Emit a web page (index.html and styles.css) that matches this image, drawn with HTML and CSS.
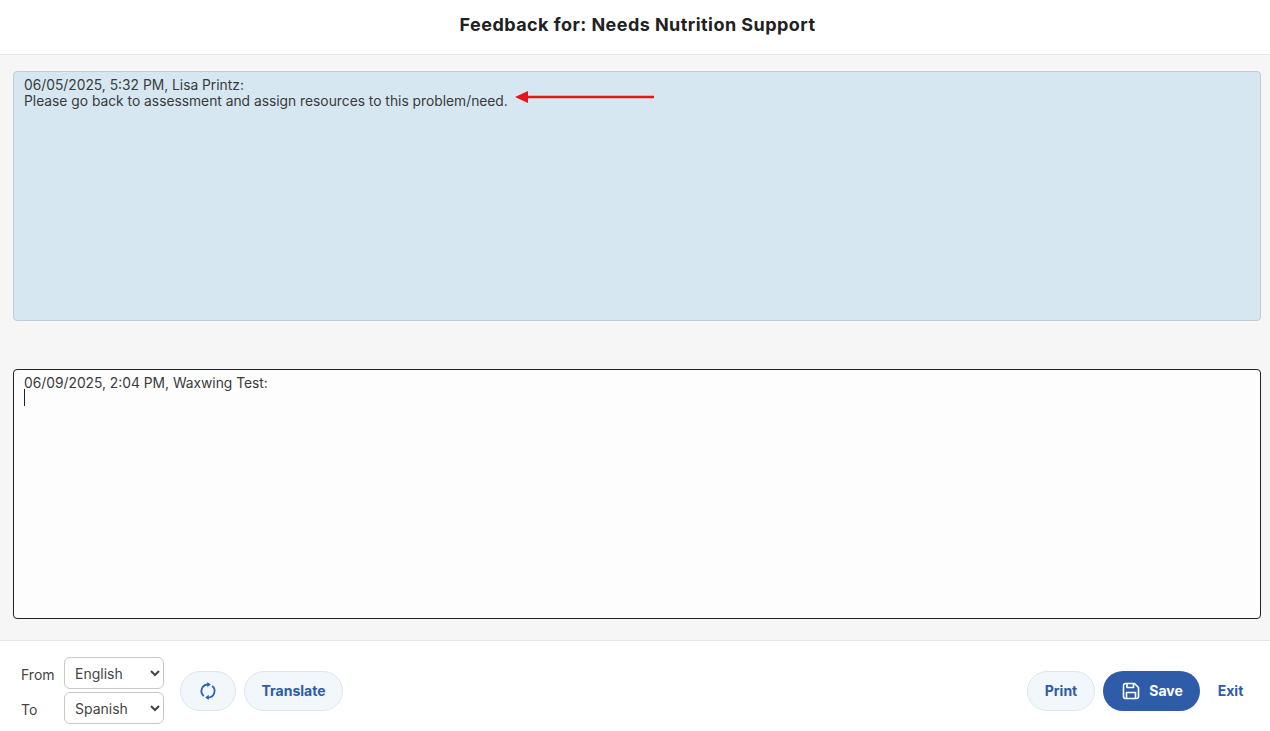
FILE: index.html
```html
<!DOCTYPE html>
<html lang="en">
<head>
<meta charset="utf-8">
<title>Feedback</title>
<link rel="stylesheet" href="styles.css">
</head>
<body>
<div class="page">
  <header class="header"><h1 class="title">Feedback for: Needs Nutrition Support</h1></header>
  <main class="main">
    <div class="note-wrap">
      <textarea class="note note-read" readonly>06/05/2025, 5:32 PM, Lisa Printz:
Please go back to assessment and assign resources to this problem/need.</textarea>
      <svg class="arrow" width="140" height="14" viewBox="0 0 140 14" aria-hidden="true"><path d="M0 7 13 1V5.700H139V8.300H13V13Z" fill="#e3161b"/></svg>
    </div>
    <div class="note-wrap">
      <textarea class="note note-edit">06/09/2025, 2:04 PM, Waxwing Test:
</textarea>
      <span class="caret"></span>
    </div>
  </main>
  <footer class="footer">
    <div class="langs">
      <label class="lang"><span class="lang-label">From</span>
        <select class="select"><option>English</option></select></label>
      <label class="lang"><span class="lang-label">To</span>
        <select class="select"><option>Spanish</option></select></label>
    </div>
    <button class="btn btn-light btn-icon" type="button" aria-label="Swap languages">
      <svg width="18" height="18" viewBox="0 0 18 18" fill="none" stroke="#2f62b0" stroke-width="1.800" aria-hidden="true">
        <path d="M4.800 14A6.500 6.500 0 0 1 9 2.500"/><path d="M13.200 4A6.500 6.500 0 0 1 9 15.500"/>
        <path d="M8.300 0 11.800 2.600 8.300 5.200Z" fill="#2f62b0" stroke="none"/><path d="M9.700 12.800 6.200 15.400 9.700 18Z" fill="#2f62b0" stroke="none"/>
      </svg>
    </button>
    <button class="btn btn-light btn-translate" type="button">Translate</button>
    <div class="spacer"></div>
    <button class="btn btn-light btn-print" type="button">Print</button>
    <button class="btn btn-save" type="button">
      <svg width="18" height="18" viewBox="0 0 18 18" fill="none" stroke="#fff" stroke-width="1.600" stroke-linejoin="round" aria-hidden="true">
        <path d="M3.500 1.500H12.500L16.500 5.500V14.500A2 2 0 0 1 14.500 16.500H3.500A2 2 0 0 1 1.500 14.500V3.500A2 2 0 0 1 3.500 1.500Z"/>
        <path d="M5 1.500V5.500H11.500V1.500"/><path d="M4.500 16.500V10.500H13.500V16.500"/>
      </svg>
      Save
    </button>
    <button class="btn btn-exit" type="button">Exit</button>
  </footer>
</div>
</body>
</html>
```

FILE: styles.css
```css
* { box-sizing: border-box; }
html, body { margin: 0; height: 100%; }
body { font-family: Inter, "Liberation Sans", sans-serif; color: #3a3a3a; background: #fff; overflow: hidden; }
.page { height: 731px; display: flex; flex-direction: column; }
.header { height: 55px; flex: none; display: flex; align-items: center; justify-content: center; background: #fff; border-bottom: 1px solid #e6e6e6; padding: 0 0 5px 5px; }
.title { margin: 0; font-size: 18px; font-weight: 700; color: #212121; letter-spacing: 0.45px; }
.main { flex: none; height: 585px; background: #f6f6f6; padding: 16px 9px 0 13px; display: flex; flex-direction: column; gap: 49px; }
.note-wrap { position: relative; height: 250px; }
.note-wrap + .note-wrap { margin-top: -1px; }
.note { display: block; width: 100%; height: 100%; margin: 0; padding: 5px 10px; font: 13.8px/16px Inter, "Liberation Sans", sans-serif; color: #3a3a3a; border-radius: 4px; outline: none; resize: none; }
.note-read { background: #d6e7f2; border: 1px solid #c2ccd2; }
.note-edit { background: #fdfdfd; border: 1px solid #222; }
.arrow { position: absolute; left: 502px; top: 19px; }
.caret { position: absolute; left: 11px; top: 20px; width: 1px; height: 17px; background: #222; }
.footer { flex: 1; display: flex; align-items: center; gap: 8px; background: #fff; border-top: 1px solid #e6e6e6; padding: 10px 18px 0 21px; }
.langs { display: flex; flex-direction: column; gap: 3px; margin: -2px 8px 0 0; }
.lang { display: flex; align-items: center; justify-content: space-between; width: 143px; font-size: 14px; color: #444; }
.lang-label { padding-top: 3px; }
.select { width: 100px; height: 32px; padding: 2px 0 0 6px; font: 14px Inter, "Liberation Sans", sans-serif; color: #444; background: #fff; border: 1px solid #c8c8c8; border-radius: 6px; outline: none; }
.btn { height: 40px; border-radius: 20px; font: 700 14px Inter, "Liberation Sans", sans-serif; color: #2f5ca8; display: flex; align-items: center; justify-content: center; cursor: pointer; padding: 0 0 1px; }
.btn-light { background: #f1f7fa; border: 1px solid #dbe7ec; }
.btn-icon { width: 56px; }
.btn-translate { width: 99px; }
.spacer { flex: 1; }
.btn-print { width: 68px; }
.btn-save { width: 97px; gap: 9px; padding-left: 2px; background: #2f5ca8; border: none; color: #fff; }
.btn-exit { width: 44px; background: none; border: none; padding-left: 1px; }
```
